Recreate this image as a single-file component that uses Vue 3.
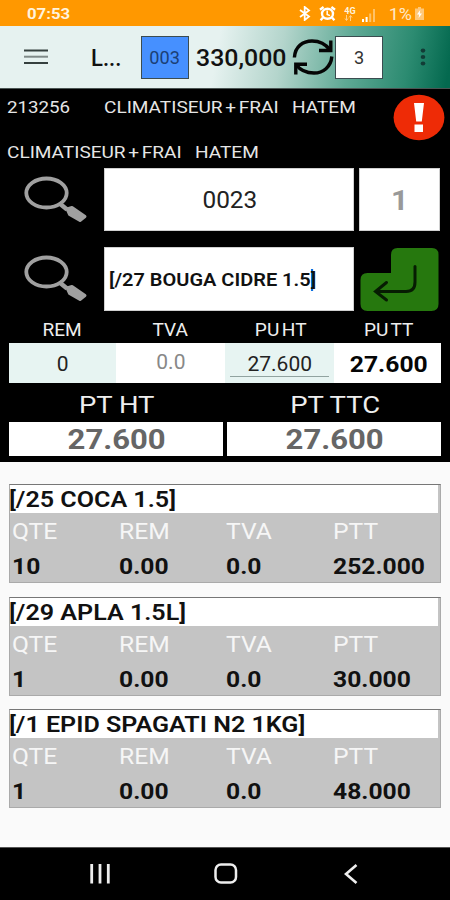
<script setup>
import { reactive, ref } from 'vue'

const client = 'CLIMATISEUR + FRAI'
const vendeur = 'HATEM'

const form = reactive({
  code: '0023',
  quantite: '1',
  article: '[/27 BOUGA CIDRE 1.5'
})

const prix = [
  { label: 'REM', valeur: '0', classe: 'mint' },
  { label: 'TVA', valeur: '0.0', classe: 'pale' },
  { label: 'PU HT', valeur: '27.600', classe: 'mint souligne' },
  { label: 'PU TT', valeur: '27.600', classe: 'fort' }
]

const totaux = [
  { label: 'PT HT', valeur: '27.600' },
  { label: 'PT TTC', valeur: '27.600' }
]

const lignes = ref([
  { nom: '[/25 COCA 1.5]', qte: '10', rem: '0.00', tva: '0.0', ptt: '252.000' },
  { nom: '[/29 APLA 1.5L]', qte: '1', rem: '0.00', tva: '0.0', ptt: '30.000' },
  { nom: '[/1 EPID SPAGATI N2 1KG]', qte: '1', rem: '0.00', tva: '0.0', ptt: '48.000' }
])
</script>

<template>
  <div class="ecran">
    <div class="statut">
      <span class="t heure">07:53</span>
      <div class="statut-icones">
        <svg class="bt" width="12" height="15" viewBox="0 0 12 15">
          <path d="M1 4l9 6.6L5.7 14V1L10 4.4 1 11" fill="none" stroke="#fff" stroke-width="1.8" />
        </svg>
        <svg class="alarme" width="17" height="15" viewBox="0 0 17 15">
          <path d="M1 3.8L4.6 1M16 3.8L12.4 1M4 11.5l-2.4 2.7M13 11.500l2.400 2.700" stroke="#fff" stroke-width="2.400" />
          <ellipse cx="8.5" cy="7.8" rx="5.5" ry="5" fill="none" stroke="#fff" stroke-width="2.400" />
          <path d="M8.2 4.6v3.8l2.8 1.2" fill="none" stroke="#fff" stroke-width="1.5" />
        </svg>
        <div class="reseau">
          <span>4G</span>
          <svg width="9" height="6" viewBox="0 0 9 6">
            <path d="M2.5 0v5M1 3.5L2.5 5.5 4 3.5M6.5 6V1M5 2.5L6.5.5 8 2.5" fill="none" stroke="#ffd08a" stroke-width="1" />
          </svg>
        </div>
        <svg class="signal" width="15" height="13" viewBox="0 0 15 13">
          <path d="M1 10h2v3H1zM4.6 8h2v5h-2z" fill="#fff" />
          <path d="M8.2 4.5h2V13h-2zM12 0h2v13h-2z" fill="#ffc266" />
        </svg>
        <span class="t pourcent">1%</span>
        <svg class="batterie" width="9" height="13" viewBox="0 0 9 13">
          <path d="M3 0h3v1.5h3V13H0V1.5h3z" fill="#ffc879" />
          <path d="M5.2 3L2 7.4h2.2L3.6 11 7 6.4H4.8z" fill="#fff" />
        </svg>
      </div>
    </div>

    <header class="barre">
      <svg class="menu" width="24" height="16" viewBox="0 0 24 16">
        <path d="M0 1.5h24M0 14h24" stroke="#35403e" stroke-width="1.8" />
        <path d="M0 7.7h24" stroke="#7f8a88" stroke-width="2" />
      </svg>
      <span class="t titre">L...</span>
      <div class="case bleu"><span class="t">003</span></div>
      <span class="t total">330,000</span>
      <svg class="sync" width="42" height="38" viewBox="0 0 42 38" fill="none" stroke="#050505" stroke-width="3.4">
        <path d="M2.4 19.5C3 8.500 11 3 20 3c8.500 0 14 3.500 18 9" />
        <path d="M39.800 18.500C39 29 31 35 22 35c-8.500 0-14-3-18-8.500" />
        <path d="M38.800 2.500v10H27M3.800 36.500V26.300H15" />
      </svg>
      <div class="case blanc"><span class="t">3</span></div>
      <svg class="points" width="6" height="18" viewBox="0 0 6 18" fill="#123c36">
        <ellipse cx="3" cy="2.600" rx="2.300" ry="2.100" />
        <ellipse cx="3" cy="9" rx="2.300" ry="2.100" />
        <ellipse cx="3" cy="15.500" rx="2.300" ry="2.100" />
      </svg>
    </header>

    <main class="saisie">
      <div class="client premier">
        <span class="t numero">213256</span>
        <span class="t nom">{{ client }}</span>
        <span class="t">{{ vendeur }}</span>
        <svg class="alerte" width="52" height="47" viewBox="0 0 52 47">
          <ellipse cx="26" cy="23.500" rx="25.400" ry="22.700" fill="#ee2b06" />
          <path d="M21 9h10l-2.200 18.500h-5.600zM21.500 30.500h8.500v7.500h-8.500z" fill="#fff" />
        </svg>
      </div>
      <div class="client">
        <span class="t nom">{{ client }}</span>
        <span class="t">{{ vendeur }}</span>
      </div>

      <div class="ligne-saisie">
        <svg class="loupe" width="64" height="48" viewBox="0 0 64 48">
          <ellipse cx="22.500" cy="17" rx="20.200" ry="14.500" fill="none" stroke="#a0a0a0" stroke-width="3.800" />
          <path d="M35 27l8 6.500" stroke="#a0a0a0" stroke-width="4.500" />
          <path d="M43 33L48 31.500 61 40.500 56 44.500 45.500 38.500z" fill="#a0a0a0" stroke="#a0a0a0" stroke-width="3" stroke-linejoin="round" />
        </svg>
        <div class="champ code"><span class="t">{{ form.code }}</span></div>
        <div class="champ quantite"><span class="t">{{ form.quantite }}</span></div>
      </div>

      <div class="ligne-saisie seconde">
        <svg class="loupe" width="64" height="48" viewBox="0 0 64 48">
          <ellipse cx="22.500" cy="17" rx="20.200" ry="14.500" fill="none" stroke="#a0a0a0" stroke-width="3.800" />
          <path d="M35 27l8 6.500" stroke="#a0a0a0" stroke-width="4.500" />
          <path d="M43 33L48 31.500 61 40.500 56 44.500 45.500 38.500z" fill="#a0a0a0" stroke="#a0a0a0" stroke-width="3" stroke-linejoin="round" />
        </svg>
        <div class="champ article">
          <span class="t">{{ form.article }}<i class="curseur"></i>]</span>
        </div>
        <svg class="entree" width="79" height="64" viewBox="0 0 79 64">
          <path d="M37.500 0H72q6.500 0 6.500 6.500V56q0 7-7 7H7.500q-7 0-7-7V32q0-7 7-7H31V7q0-7 6.500-7z" fill="#26780e" />
          <path d="M55 18.500V34c0 6-3 9.500-9 9.500H16M26.500 34.500L15.500 43.500l11 8.500" fill="none" stroke="#061c02" stroke-width="3" stroke-linecap="round" />
        </svg>
      </div>

      <div class="grille labels">
        <div v-for="p in prix" :key="p.label"><span class="t">{{ p.label }}</span></div>
      </div>
      <div class="grille valeurs">
        <div v-for="p in prix" :key="p.label" :class="p.classe">
          <span class="t">{{ p.valeur }}</span>
        </div>
      </div>

      <div class="totaux">
        <div v-for="t in totaux" :key="t.label" class="bloc-total">
          <div class="libelle"><span class="t">{{ t.label }}</span></div>
          <div class="montant"><span class="t">{{ t.valeur }}</span></div>
        </div>
      </div>
    </main>

    <section class="liste">
      <article v-for="l in lignes" :key="l.nom" class="carte">
        <div class="carte-nom"><span class="t">{{ l.nom }}</span></div>
        <div class="carte-grille entetes">
          <span class="t">QTE</span>
          <span class="t">REM</span>
          <span class="t">TVA</span>
          <span class="t">PTT</span>
        </div>
        <div class="carte-grille chiffres">
          <span class="t">{{ l.qte }}</span>
          <span class="t">{{ l.rem }}</span>
          <span class="t">{{ l.tva }}</span>
          <span class="t">{{ l.ptt }}</span>
        </div>
      </article>
    </section>

    <nav class="navigation">
      <svg width="20" height="20" viewBox="0 0 20 20">
        <path d="M1.700 0v19.500M10 0v19.500M18.300 0v19.500" stroke="#eee" stroke-width="2.800" />
      </svg>
      <svg class="accueil" width="24" height="21" viewBox="0 0 24 21">
        <rect x="1.500" y="1.500" width="20.500" height="18" rx="5.500" fill="none" stroke="#eee" stroke-width="2.500" />
      </svg>
      <svg width="14" height="20" viewBox="0 0 14 20">
        <path d="M12.500 1L2 10l10.500 9" fill="none" stroke="#eee" stroke-width="2.600" />
      </svg>
    </nav>
  </div>
</template>

<style>
body {
  margin: 0;
}
</style>

<style scoped>
.ecran {
  width: 450px;
  height: 900px;
  display: flex;
  flex-direction: column;
  overflow: hidden;
  background: #fafafa;
  color: #111;
  font-family: Roboto, "Liberation Sans", sans-serif;
}

.ecran *,
.ecran {
  box-sizing: border-box;
}

svg {
  display: block;
  flex: none;
}

/* wide letters */
.t {
  --sx: 1.12;
  display: inline-block;
  white-space: nowrap;
  transform: scaleX(var(--sx));
}

.statut {
  height: 26px;
  flex: none;
  display: flex;
  justify-content: space-between;
  padding: 0 26px 0 27px;
  background: #ff9800;
  color: #fff3dc;
}

.heure {
  font-size: 15.5px;
  font-weight: 700;
  line-height: 28px;
  transform-origin: left;
  --sx: 1.08;
}

.statut-icones {
  display: flex;
  align-items: center;
  height: 27px;
}

.bt {
  margin-right: 1px;
}

.alarme {
  margin-left: 7px;
}

.reseau {
  width: 12px;
  margin-left: 8px;
  font-size: 9px;
  font-weight: 700;
  line-height: 8px;
}

.signal {
  margin-left: 5px;
  margin-top: 3px;
}

.pourcent {
  margin: 1px 4px 0 14px;
  font-size: 16px;
  color: #ffe8c6;
}

.barre {
  height: 63px;
  flex: none;
  display: flex;
  align-items: center;
  padding-left: 24px;
  border-bottom: 1px solid #4b5553;
  background: linear-gradient(100deg, #e6f2f0 0%, #e6f2f0 48%, #b4d5cc 62%, #5fa995 77%, #2c8b71 90%, #04694f 99%);
}

.titre {
  width: 29px;
  margin: 2px 0 0 43px;
  font-size: 23px;
  font-weight: 500;
  transform-origin: left;
  --sx: 0.96;
}

.case {
  width: 48px;
  height: 43px;
  display: flex;
  align-items: center;
  justify-content: center;
  padding-top: 2px;
  border: 1px solid #3b4c50;
  font-size: 18.5px;
}

.case .t {
  --sx: 0.98;
}

.bleu {
  margin-left: 21px;
  background: #4690ff;
  color: #1b3f75;
}

.total {
  width: 92px;
  margin: 2px 0 0 7px;
  font-size: 23.5px;
  font-weight: 500;
  transform-origin: left;
  --sx: 1.06;
}

.sync {
  margin-left: 4px;
}

.blanc {
  margin-left: 1px;
  background: #fff;
  color: #333;
}

.points {
  margin-left: 37px;
}

.saisie {
  height: 373px;
  flex: none;
  background: #000;
}

.client {
  display: flex;
  height: 36px;
  padding: 0 7px;
  align-items: center;
  color: #e6e6e6;
  font-size: 17px;
}

.client .t {
  transform-origin: left;
}

.client .nom {
  width: 188px;
  word-spacing: -1.8px;
}

.premier {
  position: relative;
  margin-bottom: 9px;
}

.premier .numero {
  width: 97px;
  --sx: 1.1;
}

.alerte {
  position: absolute;
  top: 5px;
  left: 393px;
}

.ligne-saisie {
  display: flex;
  height: 63px;
  margin-top: -2px;
  padding-left: 24px;
}

.seconde {
  height: 64px;
  margin-top: 16px;
}

.loupe {
  margin: 8px 16px 0 0;
}

.champ {
  display: flex;
  align-items: center;
  justify-content: center;
  padding-top: 2px;
  background: #fff;
  border: 1px solid #d0d0d0;
}

.code {
  width: 250px;
  font-size: 23px;
  color: #222;
}

.code .t {
  margin-left: 1px;
  --sx: 1.06;
}

.quantite {
  width: 81px;
  margin-left: 5px;
  font-size: 27px;
  font-weight: 700;
  color: #999;
}

.article {
  width: 250px;
  justify-content: flex-start;
  padding-left: 4px;
  font-size: 18.5px;
  font-weight: 600;
}

.article .t {
  transform-origin: left;
  --sx: 1.08;
}

.curseur {
  display: inline-block;
  width: 2px;
  height: 22px;
  margin-right: -2px;
  vertical-align: -5px;
  background: #0a6fe0;
}

.entree {
  margin: 1px 0 0 6px;
}

.grille {
  display: grid;
  grid-template-columns: 107px 109px 109px 107px;
  margin: 0 9px;
}

.grille div {
  display: flex;
  align-items: center;
  justify-content: center;
}

.labels {
  height: 32px;
  padding-top: 6px;
  color: #eee;
  font-size: 17.5px;
  word-spacing: -2px;
}

.labels .t {
  --sx: 1.09;
}

.labels div:nth-child(n + 3) {
  padding-left: 3px;
}

.valeurs {
  height: 40px;
  background: #fff;
  color: #222;
  font-size: 20px;
}

.valeurs div {
  padding-top: 2px;
}

.valeurs .t {
  --sx: 1.05;
}

.valeurs .mint {
  background: #e7f4f2;
}

.valeurs .pale {
  padding-bottom: 5px;
  color: #888;
}

.souligne {
  position: relative;
}

.souligne::after {
  content: '';
  position: absolute;
  left: 5px;
  right: 5px;
  bottom: 6px;
  border-bottom: 1px solid #91a3a0;
}

.valeurs .fort {
  padding-left: 3px;
  color: #050505;
  font-size: 22px;
  font-weight: 700;
}

.valeurs .fort .t {
  --sx: 1.12;
}

.totaux {
  display: grid;
  grid-template-columns: 214px 214px;
  gap: 4px;
  margin: 0 9px;
}

.bloc-total {
  text-align: center;
}

.libelle {
  height: 39px;
  padding-left: 2px;
  line-height: 43px;
  color: #eee;
  font-size: 24.5px;
}

.montant {
  height: 34px;
  padding-left: 1px;
  line-height: 37px;
  background: #fff;
  color: #666;
  font-size: 27px;
  font-weight: 700;
}

.montant .t {
  --sx: 1.15;
}

.liste {
  flex: 1;
  display: flex;
  flex-direction: column;
  gap: 13.5px;
  padding: 22px 9px 0;
}

.carte {
  height: 99px;
  flex: none;
  background: #c4c4c4;
  border: 1px solid #aaa;
  border-top-color: #777;
}

.carte-nom {
  height: 28px;
  margin-right: 2px;
  line-height: 29px;
  background: #fff;
  font-size: 22px;
  font-weight: 600;
}

.carte-nom .t {
  margin-left: -1px;
  transform-origin: left;
  --sx: 1.14;
}

.carte-grille {
  display: grid;
  grid-template-columns: repeat(4, 107px);
  height: 35px;
  padding-left: 2px;
  font-size: 22px;
  line-height: 37px;
}

.carte-grille .t {
  transform-origin: left;
}

.entetes {
  color: #f6f6f6;
}

.chiffres {
  font-weight: 700;
}

.navigation {
  height: 53px;
  flex: none;
  display: flex;
  align-items: center;
  justify-content: space-between;
  padding: 0 92px 0 90px;
  border-top: 1px solid #555;
  background: #000;
}

.accueil {
  margin: -1px 2px 0 0;
}
</style>
